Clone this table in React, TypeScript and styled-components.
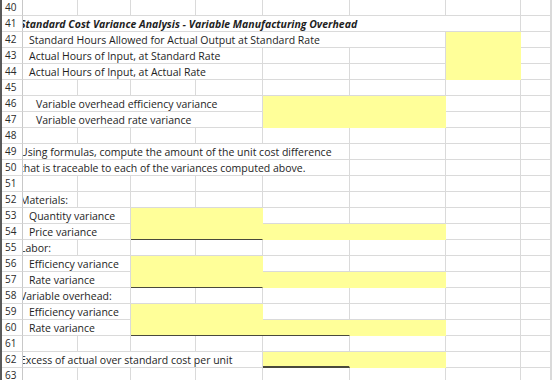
import React from "react";
import styled, { createGlobalStyle, css } from "styled-components";

const GlobalStyle = createGlobalStyle`
  html, body { margin: 0; padding: 0; background: #ffffff; overflow: hidden; }
  #root { width: 552px; height: 380px; }
`;

const COLS = "55px 53px 65px 67px 87px 96px 75px 30px 1fr";
const GRID = "#dadada";
const YELLOW = "#ffff99";

const Sheet = styled.div`
  width: 552px;
  height: 380px;
  overflow: hidden;
  display: flex;
  flex-direction: column;
  border-left: 2px solid #5a5a5a;
  box-sizing: border-box;
  font-family: "Open Sans", "Noto Sans", sans-serif;
  color: #1e1e1e;
`;

const Row = styled.div`
  display: flex;
  flex: 0 0 16px;
  height: 16px;
`;

const RowHeader = styled.div`
  flex: 0 0 21px;
  box-sizing: border-box;
  border-right: 1px solid #c8c8c8;
  border-bottom: 1px solid ${GRID};
  font-size: 10px;
  line-height: 15px;
  padding-left: 3px;
  color: #2a2a2a;
  background: #ffffff;
`;

const Cells = styled.div`
  flex: 1;
  display: grid;
  grid-template-columns: ${COLS};
`;

type CellProps = {
  $span?: number;
  $fill?: boolean;
  $underline?: number;
  $pad?: number;
  $bold?: boolean;
  $clip?: boolean;
};

const Cell = styled.div<CellProps>`
  grid-column: span ${(p) => p.$span ?? 1};
  box-sizing: border-box;
  height: 16px;
  overflow: hidden;
  white-space: nowrap;
  border-right: 1px solid ${GRID};
  border-bottom: 1px solid ${GRID};
  font-size: 10.5px;
  line-height: 16px;
  padding-left: ${(p) => p.$pad ?? 0}px;
  text-indent: ${(p) => (p.$clip ? -3 : 0)}px;
  ${(p) =>
    p.$bold &&
    css`
      font-weight: 700;
      font-style: italic;
    `}
  ${(p) =>
    p.$fill &&
    css`
      background: ${YELLOW};
      border-right-color: ${YELLOW};
      border-bottom-color: ${YELLOW};
    `}
  ${(p) =>
    p.$fill &&
    p.$underline &&
    css`
      border-bottom: ${p.$underline}px solid #4a4a3c;
    `}
`;

type C = {
  span?: number;
  text?: string;
  pad?: number;
  bold?: boolean;
  clip?: boolean;
  fill?: boolean;
  underline?: number;
};

const empty = (n: number): C[] => Array.from({ length: n }, () => ({}));

const rows: { n: number; cells: C[] }[] = [
  { n: 40, cells: empty(9) },
  {
    n: 41,
    cells: [
      { span: 7, text: "Standard Cost Variance Analysis - Variable Manufacturing Overhead", bold: true, clip: true },
      ...empty(2),
    ],
  },
  {
    n: 42,
    cells: [
      { span: 6, text: "Standard Hours Allowed for Actual Output at Standard Rate", pad: 6 },
      { fill: true },
      ...empty(2),
    ],
  },
  {
    n: 43,
    cells: [{ span: 4, text: "Actual Hours of Input, at Standard Rate", pad: 6 }, ...empty(2), { fill: true }, ...empty(2)],
  },
  {
    n: 44,
    cells: [{ span: 4, text: "Actual Hours of Input, at Actual Rate", pad: 6 }, ...empty(2), { fill: true }, ...empty(2)],
  },
  { n: 45, cells: empty(9) },
  {
    n: 46,
    cells: [{ span: 4, text: "Variable overhead efficiency variance", pad: 13 }, { span: 2, fill: true }, ...empty(3)],
  },
  {
    n: 47,
    cells: [{ span: 4, text: "Variable overhead rate variance", pad: 13 }, { span: 2, fill: true }, ...empty(3)],
  },
  { n: 48, cells: empty(9) },
  {
    n: 49,
    cells: [
      { span: 5, text: "Using formulas, compute the amount of the unit cost difference", clip: true },
      ...empty(4),
    ],
  },
  {
    n: 50,
    cells: [{ span: 5, text: "that is traceable to each of the variances computed above.", clip: true }, ...empty(4)],
  },
  { n: 51, cells: empty(9) },
  { n: 52, cells: [{ text: "Materials:", clip: true }, ...empty(8)] },
  {
    n: 53,
    cells: [{ span: 2, text: "Quantity variance", pad: 6 }, { span: 2, fill: true }, ...empty(5)],
  },
  {
    n: 54,
    cells: [
      { span: 2, text: "Price variance", pad: 6 },
      { span: 2, fill: true, underline: 1 },
      { span: 2, fill: true },
      ...empty(3),
    ],
  },
  { n: 55, cells: [{ text: "Labor:", clip: true }, ...empty(8)] },
  {
    n: 56,
    cells: [{ span: 2, text: "Efficiency variance", pad: 6 }, { span: 2, fill: true }, ...empty(5)],
  },
  {
    n: 57,
    cells: [
      { span: 2, text: "Rate variance", pad: 6 },
      { span: 2, fill: true, underline: 1 },
      { span: 2, fill: true },
      ...empty(3),
    ],
  },
  { n: 58, cells: [{ span: 2, text: "Variable overhead:", clip: true }, ...empty(7)] },
  {
    n: 59,
    cells: [{ span: 2, text: "Efficiency variance", pad: 6 }, { span: 2, fill: true }, ...empty(5)],
  },
  {
    n: 60,
    cells: [
      { span: 2, text: "Rate variance", pad: 6 },
      { span: 3, fill: true, underline: 1 },
      { fill: true },
      ...empty(3),
    ],
  },
  { n: 61, cells: empty(9) },
  {
    n: 62,
    cells: [
      { span: 4, text: "Excess of actual over standard cost per unit", clip: true },
      { fill: true, underline: 2 },
      { fill: true },
      ...empty(3),
    ],
  },
  { n: 63, cells: empty(9) },
];

export default function App() {
  return (
    <>
      <GlobalStyle />
      <Sheet>
        {rows.map((r) => (
          <Row key={r.n}>
            <RowHeader>{r.n}</RowHeader>
            <Cells>
              {r.cells.map((c, i) => (
                <Cell
                  key={i}
                  $span={c.span}
                  $fill={c.fill}
                  $underline={c.underline}
                  $pad={c.pad}
                  $bold={c.bold}
                  $clip={c.clip}
                >
                  {c.text}
                </Cell>
              ))}
            </Cells>
          </Row>
        ))}
      </Sheet>
    </>
  );
}
